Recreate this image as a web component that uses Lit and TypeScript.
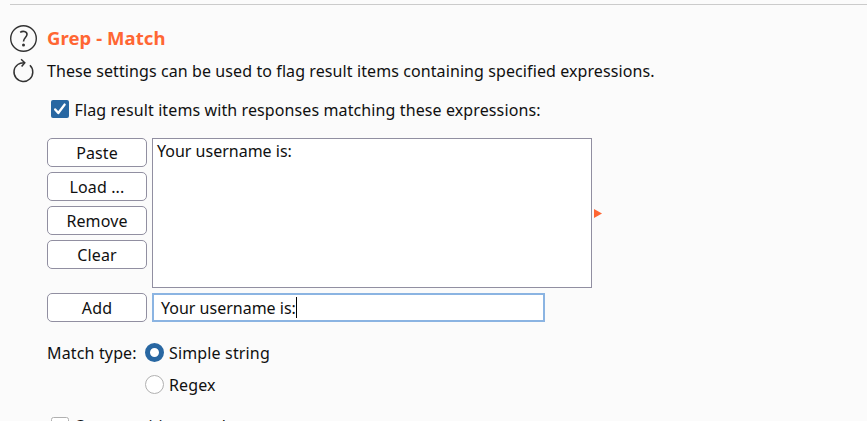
import { LitElement, html, css, svg } from "lit";
import { customElement, state } from "lit/decorators.js";

@customElement("app-root")
export class AppRoot extends LitElement {
  static styles = css`
    :host { display: block; height: 421px; overflow: hidden; background: #fbfbfb; color: #101010;
      font: 16px/22px "Noto Sans", sans-serif; }
    * { box-sizing: border-box; }
    .panel { height: 421px; overflow: hidden; padding-top: 4px; white-space: nowrap; }
    .rule { height: 1px; margin-left: 10px; background: #cbcbcb; }
    .head { display: flex; height: 33px; margin-top: 17px; padding-left: 9px; align-items: center; }
    .slot { width: 38px; display: flex; }
    svg { display: block; flex: none; }
    h2 { margin: 0 0 2px; font-size: 18.5px; line-height: 26px; font-weight: 700; color: #ff6633; letter-spacing: 0.07px; }
    .desc { display: flex; height: 32px; padding-left: 9px; align-items: center; letter-spacing: 0.093px; }
    .flag { display: flex; align-items: center; height: 22px; margin: 12px 0 0 51px; gap: 5.5px; letter-spacing: 0.108px; }
    .flag svg { margin-bottom: 2px; }
    .grid { display: grid; grid-template-columns: 100px 440px 14px; column-gap: 5px; margin: 17px 0 0 47px; }
    .buttons { display: flex; flex-direction: column; gap: 5px; }
    button { width: 100px; height: 29px; padding: 2px 0 0; border: 1px solid #918fa1; border-radius: 5px;
      background: #fff; color: #101010; font: inherit; line-height: 25px; letter-spacing: 0.12px; }
    .list { height: 150px; border: 1px solid #918fa1; background: #fff; padding: 1px 4px; }
    .marker { align-self: center; margin-left: -3px; }
    .add { display: flex; gap: 5px; margin: 5px 0 0 47px; }
    .field { display: flex; align-items: center; width: 393px; height: 29px; padding-left: 7px;
      border: 2px solid #8bb4e2; background: #fff; }
    .caret { width: 1px; height: 21px; background: #000; }
    .match { display: grid; grid-template-columns: 98px auto; margin: 20px 0 0 47px; row-gap: 10px; letter-spacing: 0.15px; }
    .option { display: flex; align-items: center; gap: 5px; grid-column: 2; height: 22px; }
    .option svg { margin-bottom: 1px; }
    .match > .label { grid-row: 1; }
    .case { display: flex; gap: 5px; margin: 21px 0 0 51px; letter-spacing: 0.1px; }
    .case span { margin-top: -2px; font-size: 15.9px; }
  `;

  @state() private selected = "Simple string";

  private box(on: boolean) {
    return html`<svg width="18" height="18" viewBox="0 0 18 18">
      ${on
        ? svg`<rect width="18" height="18" rx="2" fill="#2867a2"/><path d="M4.2 9.5L7.3 13L13.6 4.6" fill="none" stroke="#fff" stroke-width="2.4" stroke-linecap="round" stroke-linejoin="round"/>`
        : svg`<rect x=".5" y=".5" width="17" height="17" rx="2" fill="#fff" stroke="#b0b0b0"/>`}
    </svg>`;
  }

  private radio(name: string) {
    const on = name === this.selected;
    return html`<div class="option" @click=${() => (this.selected = name)}>
      <svg width="19" height="19" viewBox="0 0 19 19">
        ${on
          ? svg`<circle cx="9.5" cy="9.5" r="7" fill="#fff" stroke="#2867a2" stroke-width="5"/>`
          : svg`<circle cx="9.5" cy="9.5" r="9" fill="#fff" stroke="#b0b0b0"/>`}
      </svg><span>${name}</span></div>`;
  }

  render() {
    return html`<div class="panel">
      <div class="rule"></div>
      <div class="head">
        <div class="slot"><svg width="29" height="29" viewBox="0 0 29 29" fill="none" stroke="#333" stroke-width="1.4">
          <circle cx="14.5" cy="14.5" r="12.8"/>
          <path d="M11.2 8.4C13.2 6.9 18 6.9 18 10.3C18 13.4 14.5 13.6 14.5 17.6" stroke-width="1.6"/>
          <circle cx="14.5" cy="21" r="1.5" fill="#333" stroke="none"/>
        </svg></div>
        <h2>Grep - Match</h2>
      </div>
      <div class="desc">
        <div class="slot"><svg width="29" height="26" viewBox="0 0 29 26" fill="none" stroke="#333" stroke-width="1.5">
          <path d="M20.9 7.3A9.4 9.4 0 1 1 8.8 6.5Q11 4.7 15 4.7"/>
          <path d="M12.1 1.2L15.8 4.7L12.6 8.6"/>
        </svg></div>
        <span>These settings can be used to flag result items containing specified expressions.</span>
      </div>
      <div class="flag">${this.box(true)}<span>Flag result items with responses matching these expressions:</span></div>
      <div class="grid">
        <div class="buttons">${["Paste", "Load ...", "Remove", "Clear"].map((t) => html`<button>${t}</button>`)}</div>
        <div class="list">Your username is:</div>
        <svg class="marker" width="8" height="9" viewBox="0 0 8 9"><path d="M0 0L8 4.5L0 9Z" fill="#ff6633"/></svg>
      </div>
      <div class="add"><button>Add</button><div class="field"><span>Your username is:</span><i class="caret"></i></div></div>
      <div class="match"><span class="label">Match type:</span>${this.radio("Simple string")}${this.radio("Regex")}</div>
      <div class="case">${this.box(false)}<span>Case sensitive match</span></div>
    </div>`;
  }
}
